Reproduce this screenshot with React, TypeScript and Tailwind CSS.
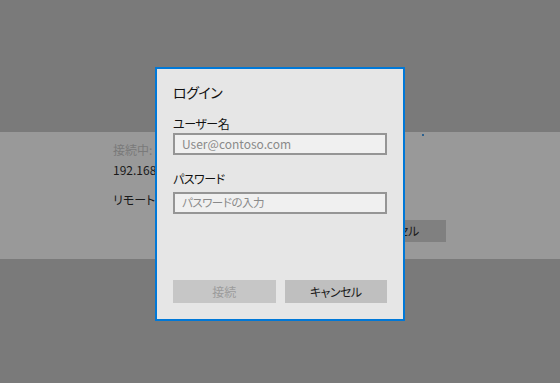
import React from 'react';

const font = "font-['Noto_Sans_CJK_JP',sans-serif] [font-feature-settings:'palt']";

const LoginDialog: React.FC = () => {
  return (
    <div className="absolute left-[155px] top-[67px] w-[250px] h-[254px] border-2 border-[#0078d7] bg-[#e6e6e6] flex flex-col px-4">
      <h1 className="mt-[13px] text-[14px] leading-[20px] text-[#111] tracking-[-0.5px]">ログイン</h1>

      <label className="mt-[14px] text-[12px] leading-[16px] text-[#111] tracking-[-0.5px]">ユーザー名</label>
      <div className="mt-[1px] h-[22px] border-2 border-[#959595] bg-[#f0f0f0] flex items-center px-[7px]">
        <span className="text-[12px] text-[#8a8a8a]">User@contoso.com</span>
      </div>

      <label className="mt-[16px] text-[12px] leading-[16px] text-[#111] tracking-[-0.5px]">パスワード</label>
      <div className="mt-[5px] h-[22px] border-2 border-[#959595] bg-[#f0f0f0] flex items-center px-[7px]">
        <span className="text-[11.5px] text-[#8a8a8a] tracking-[-0.5px]">パスワードの入力</span>
      </div>

      <div className="mt-auto mb-[16px] flex gap-[9px]">
        <button className="flex-1 h-[23px] bg-[#c6c6c6] text-[12px] text-[#9c9c9c]" disabled>
          接続
        </button>
        <button className="flex-1 h-[23px] bg-[#bfbfbf] text-[12px] text-[#1a1a1a] tracking-[-0.5px]">
          キャンセル
        </button>
      </div>
    </div>
  );
};

const App: React.FC = () => {
  return (
    <div className={`relative w-[560px] h-[383px] overflow-hidden flex flex-col bg-[#7a7a7a] ${font}`}>
      {/* dimmed page behind the dialog */}
      <div className="h-[132px]" />
      <div className="relative h-[127px] bg-[#999999] flex justify-between pl-[113px] pr-[114px]">
        <div className="flex flex-col pt-[10px] text-[12px] leading-[16px]">
          <span className="text-[#7a7a7a]">接続中:</span>
          <span className="mt-[4px] text-[#1a1a1a]">192.168.0.10</span>
          <span className="mt-[14px] text-[#1a1a1a]">リモート PC に接続しています</span>
        </div>
        <div className="flex flex-col items-end">
          <span className="mt-[2px] w-[2px] h-[2px] rounded-full bg-[#0a4f8c] mr-[22px]" />
          <button className="mt-[84px] w-[106px] h-[22px] bg-[#808080] text-[12px] text-[#1a1a1a] tracking-[-0.5px]">
            キャンセル
          </button>
        </div>
      </div>
      <div className="flex-1" />

      <LoginDialog />
    </div>
  );
};

export default App;
